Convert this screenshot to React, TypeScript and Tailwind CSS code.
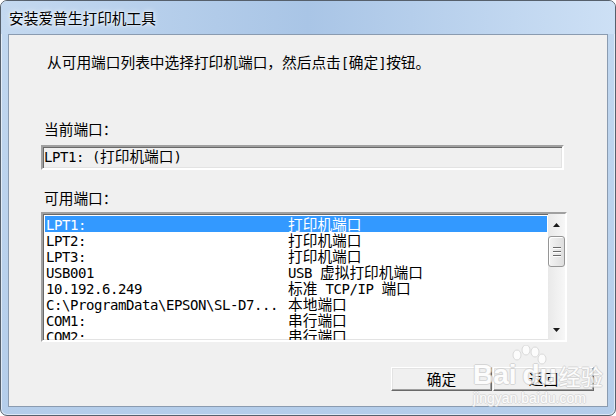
import clsx from 'clsx';

type Row = [string, string];

const ports: Row[] = [
  ['LPT1:', '打印机端口'],
  ['LPT2:', '打印机端口'],
  ['LPT3:', '打印机端口'],
  ['USB001', 'USB 虚拟打印机端口'],
  ['10.192.6.249', '标准 TCP/IP 端口'],
  ['C:\\ProgramData\\EPSON\\SL-D7...', '本地端口'],
  ['COM1:', '串行端口'],
  ['COM2:', '串行端口'],
];

// ascii runs in a mono face (8px cells), everything else in the CJK face
function Mixed({ text }: { text: string }) {
  const parts = text.match(/[\x00-\x7f]+|[^\x00-\x7f]+/g) ?? [];
  return (
    <>
      {parts.map((p, i) =>
        /^[\x00-\x7f]/.test(p) ? (
          <span
            key={i}
            className="font-['DejaVu_Sans_Mono',monospace] text-[14px] tracking-[-0.43px] whitespace-pre"
          >
            {p}
          </span>
        ) : (
          <span key={i} className="font-['Noto_Sans_CJK_SC',sans-serif] text-[14.7px]">
            {p}
          </span>
        )
      )}
    </>
  );
}

function Scrollbar() {
  return (
    <div className="flex h-full w-[17px] flex-col bg-gradient-to-r from-[#e9e9e9] to-[#f7f7f7]">
      {/* up arrow */}
      <div className="flex h-[22px] items-center justify-center">
        <svg width="7" height="4" viewBox="0 0 7 4">
          <polygon points="3.5,0 7,4 0,4" fill="#1a1a1a" />
        </svg>
      </div>
      {/* thumb */}
      <div className="flex h-[31px] flex-col items-center justify-center gap-[3px] rounded-[3px] border border-[#969696] bg-gradient-to-r from-[#f4f4f4] to-[#dedede] shadow-[inset_1px_1px_0_#ffffff]">
        <div className="h-[1px] w-[8px] bg-[#6b6b6b] shadow-[0_1px_0_#ffffff]" />
        <div className="h-[1px] w-[8px] bg-[#6b6b6b] shadow-[0_1px_0_#ffffff]" />
        <div className="h-[1px] w-[8px] bg-[#6b6b6b] shadow-[0_1px_0_#ffffff]" />
      </div>
      <div className="flex-1" />
      {/* down arrow */}
      <div className="flex h-[20px] items-center justify-center">
        <svg width="7" height="4" viewBox="0 0 7 4">
          <polygon points="0,0 7,0 3.5,4" fill="#1a1a1a" />
        </svg>
      </div>
    </div>
  );
}

function Button({ label }: { label: string }) {
  return (
    <div className="flex h-[24px] w-[101px] items-center justify-center border border-t-white border-l-white border-b-[#696969] border-r-[#696969] bg-[#f0f0f0] text-black shadow-[inset_-1px_-1px_0_#a0a0a0,inset_1px_1px_0_#e3e3e3]">
      <Mixed text={label} />
    </div>
  );
}

export default function App() {
  return (
    <div className="relative h-[416px] w-[616px] overflow-hidden rounded-[7px] border border-[#56606c] bg-gradient-to-b from-[#c2d8f0] to-[#b4cdea] shadow-[inset_0_0_0_1px_rgba(255,255,255,0.55)]">
      {/* title bar */}
      <div className="flex h-[33px] items-center bg-gradient-to-r from-[#c4d9f0] via-[#a9c5e6] to-[#cde0f5] pl-[8px]">
        <div className="leading-[16px] text-black [text-shadow:0_0_6px_#ffffff,0_0_3px_#ffffff]">
          <Mixed text="安装爱普生打印机工具" />
        </div>
      </div>

      {/* client area */}
      <div className="mx-[7px] flex h-[373px] flex-col border border-[#8a9bb0] bg-[#f0f0f0] text-black">
        <div className="mt-[19px] h-[16px] whitespace-nowrap pl-[38px] leading-[16px]">
          <Mixed text="从可用端口列表中选择打印机端口，然后点击[确定]按钮。" />
        </div>

        <div className="mt-[51px] h-[16px] pl-[35px] leading-[16px]">
          <Mixed text="当前端口：" />
        </div>

        <div className="ml-[32px] mt-[8px] flex h-[25px] w-[523px] items-center border-2 border-t-[#a0a0a0] border-l-[#a0a0a0] border-b-white border-r-white bg-[#f0f0f0] pl-[1px] leading-[16px] shadow-[inset_1px_1px_0_#696969,inset_-1px_-1px_0_#e3e3e3]">
          <div className="-mt-[2px] whitespace-nowrap">
            <Mixed text="LPT1: (打印机端口)" />
          </div>
        </div>

        <div className="mt-[20px] h-[16px] pl-[35px] leading-[16px]">
          <Mixed text="可用端口：" />
        </div>

        <div className="ml-[32px] mt-[6px] flex h-[130px] w-[526px] border-2 border-t-[#a0a0a0] border-l-[#a0a0a0] border-b-white border-r-white bg-white shadow-[inset_1px_1px_0_#696969,inset_-1px_-1px_0_#e3e3e3]">
          <div className="flex-1 overflow-hidden pl-[2px] pr-[1px] pt-[2px]">
            {ports.map(([name, desc], i) => (
              <div
                key={name}
                className={clsx(
                  'flex h-[16px] items-center whitespace-nowrap leading-[16px]',
                  i === 0 ? 'bg-[#3399ff] text-white' : 'text-black'
                )}
              >
                <div className="w-[243px] pl-[1px]">
                  <Mixed text={name} />
                </div>
                <div>
                  <Mixed text={desc} />
                </div>
              </div>
            ))}
          </div>
          <Scrollbar />
        </div>

        <div className="ml-[382px] mt-[25px] flex gap-[1px]">
          <Button label="确定" />
          <Button label="返回" />
        </div>
      </div>

      {/* baidu jingyan watermark */}
      <div className="pointer-events-none absolute left-[472px] top-[344px] flex flex-col items-start opacity-80">
        <svg width="44" height="26" viewBox="0 0 44 26" className="ml-[34px]">
          <ellipse cx="10" cy="10" rx="4" ry="5" fill="#ffffff" stroke="#d4d4d4" />
          <ellipse cx="19" cy="5" rx="4" ry="5" fill="#ffffff" stroke="#d4d4d4" />
          <ellipse cx="28" cy="7" rx="4" ry="5" fill="#ffffff" stroke="#d4d4d4" />
          <ellipse cx="35" cy="14" rx="4" ry="5" fill="#ffffff" stroke="#d4d4d4" />
        </svg>
        <div className="-mt-[10px] flex items-end font-['Liberation_Sans',sans-serif] text-[28px] font-bold leading-[28px] text-white [text-shadow:1px_0_0_#cfcfcf,-1px_0_0_#cfcfcf,0_1px_0_#cfcfcf,0_-1px_0_#cfcfcf]">
          <span>Bai</span>
          <span className="ml-[6px]">du</span>
          <span className="ml-[2px] font-['Noto_Sans_CJK_SC',sans-serif] text-[22px] font-normal">经验</span>
        </div>
        <div className="mt-[2px] font-['Liberation_Sans',sans-serif] text-[14px] leading-[14px] text-white [text-shadow:1px_0_0_#d6d6d6,-1px_0_0_#d6d6d6,0_1px_0_#d6d6d6,0_-1px_0_#d6d6d6]">
          jingyan.baidu.com
        </div>
      </div>
    </div>
  );
}
